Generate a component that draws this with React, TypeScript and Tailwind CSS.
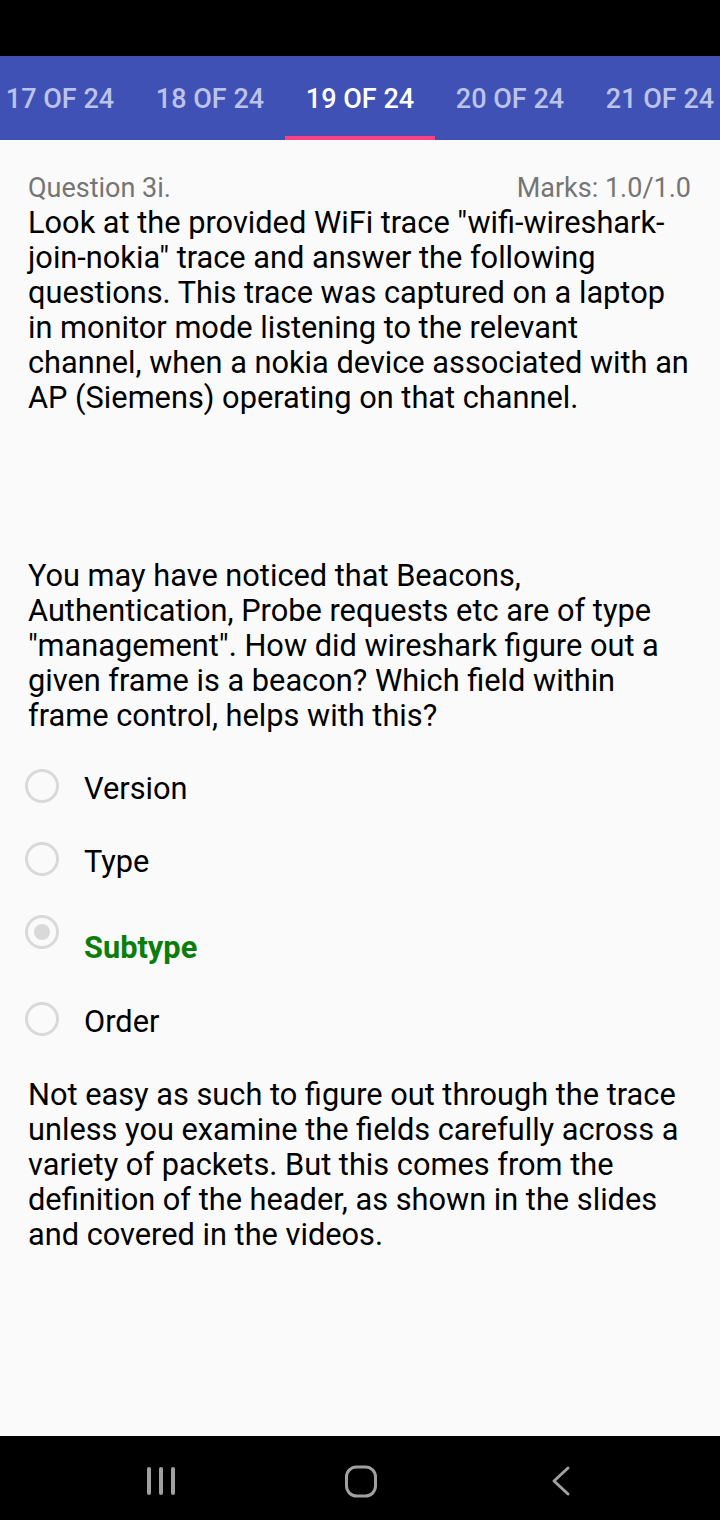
import React from 'react';

const tabs = ['17 OF 24', '18 OF 24', '19 OF 24', '20 OF 24', '21 OF 24'];

const options = [
  { label: 'Version', picked: false },
  { label: 'Type', picked: false },
  { label: 'Subtype', picked: true },
  { label: 'Order', picked: false },
];

const Radio: React.FC<{ picked: boolean }> = ({ picked }) => (
  <div className="w-[34px] h-[34px] rounded-full border-[3px] border-[#d9d9d9] flex items-center justify-center shrink-0">
    {picked && <div className="w-[16px] h-[16px] rounded-full bg-[#d9d9d9]" />}
  </div>
);

const App: React.FC = () => {
  return (
    <div className="w-[720px] h-[1520px] flex flex-col bg-[#fafafa] overflow-hidden" style={{ fontFamily: 'Roboto, "Noto Sans", sans-serif' }}>
      {/* status bar */}
      <div className="h-[56px] bg-black shrink-0" />

      {/* tabs */}
      <div className="h-[84px] bg-[#3f51b5] shrink-0 flex -ml-[15px]">
        {tabs.map((t, i) => (
          <div key={t} className="w-[150px] shrink-0 flex flex-col">
            <div className={`flex-1 flex items-center justify-center text-[27px] font-medium pt-[6px] whitespace-nowrap ${i === 2 ? 'text-white' : 'text-[#bcc3e8]'}`}>
              {t}
            </div>
            <div className={`h-[4px] ${i === 2 ? 'bg-[#ff4081]' : ''}`} />
          </div>
        ))}
      </div>

      {/* content */}
      <div className="flex-1 pl-[28px] pr-[28px] pt-[30px]">
        <div className="flex justify-between text-[27px] text-[#757575] leading-[35px] pr-[1px] pt-[1px] -mb-[1px]">
          <span>Question 3i.</span>
          <span>Marks: 1.0/1.0</span>
        </div>
        <p className="text-[30.75px] leading-[35px] text-black">
          Look at the provided WiFi trace "wifi-wireshark-join-nokia" trace and answer the following questions. This trace was captured on a laptop in monitor mode listening to the relevant channel, when a nokia device associated with an AP (Siemens) operating on that channel.
        </p>

        <p className="text-[30.75px] leading-[35px] text-black mt-[143px]">
          You may have noticed that Beacons, Authentication, Probe requests etc are of type "management". How did wireshark figure out a given frame is a beacon? Which field within frame control, helps with this?
        </p>

        <div className="mt-[36px] -ml-[3px] flex flex-col">
          {options.map((o) => (
            <div key={o.label} className={`flex items-start gap-[25px] ${o.picked ? 'h-[87px]' : 'h-[73px]'}`}>
              <Radio picked={o.picked} />
              <span
                className={`text-[30.75px] leading-[35px] ${o.picked ? 'font-bold text-[#0a7d0a] mt-[15px]' : 'text-black mt-[2px]'}`}
              >
                {o.label}
              </span>
            </div>
          ))}
        </div>

        <p className="text-[30.75px] leading-[35px] text-black mt-[2px]">
          Not easy as such to figure out through the trace unless you examine the fields carefully across a variety of packets. But this comes from the definition of the header, as shown in the slides and covered in the videos.
        </p>
      </div>

      {/* nav bar */}
      <div className="h-[84px] bg-black shrink-0 flex items-center pl-[61px] pt-[6px]">
        <div className="w-[200px] flex justify-center">
          <svg width="32" height="30" viewBox="0 0 32 30">
            <g stroke="#a0a0a0" strokeWidth="4" strokeLinecap="round">
              <line x1="4" y1="3" x2="4" y2="27" />
              <line x1="16" y1="3" x2="16" y2="27" />
              <line x1="28" y1="3" x2="28" y2="27" />
            </g>
          </svg>
        </div>
        <div className="w-[200px] flex justify-center">
          <svg width="34" height="33" viewBox="0 0 34 33">
            <rect x="2.5" y="2" width="29" height="29" rx="10" fill="none" stroke="#a0a0a0" strokeWidth="3" />
          </svg>
        </div>
        <div className="w-[200px] flex justify-center">
          <svg width="24" height="32" viewBox="0 0 24 32">
            <polyline points="19,3 5,16 19,29" fill="none" stroke="#a0a0a0" strokeWidth="3" strokeLinecap="round" strokeLinejoin="round" />
          </svg>
        </div>
      </div>
    </div>
  );
};

export default App;
